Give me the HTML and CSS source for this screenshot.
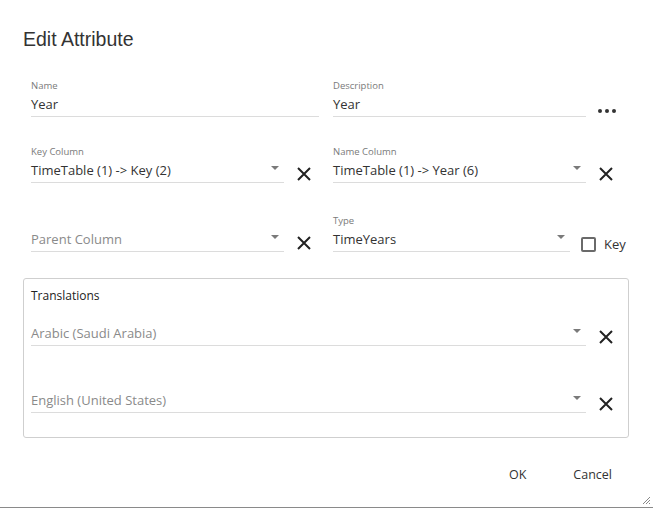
FILE: index.html
```html
<!DOCTYPE html>
<html>
<head>
<meta charset="utf-8">
<link rel="stylesheet" href="styles.css">
</head>
<body>
<div class="dialog">
  <h1 class="title">Edit Attribute</h1>
  <div class="form">
    <div class="row row1">
      <div class="field w-name">
        <div class="label">Name</div>
        <div class="input"><span class="value">Year</span></div>
      </div>
      <div class="field w-desc">
        <div class="label">Description</div>
        <div class="input"><span class="value">Year</span></div>
      </div>
      <div class="dots"><i></i><i></i><i></i></div>
    </div>

    <div class="row row2">
      <div class="field w-sel">
        <div class="label">Key Column</div>
        <div class="input"><span class="value">TimeTable (1) -&gt; Key (2)</span><span class="arrow"></span></div>
      </div>
      <svg class="x" viewBox="0 0 14 14"><path d="M1 1L13 13M13 1L1 13"/></svg>
      <div class="field w-sel">
        <div class="label">Name Column</div>
        <div class="input"><span class="value">TimeTable (1) -&gt; Year (6)</span><span class="arrow"></span></div>
      </div>
      <svg class="x" viewBox="0 0 14 14"><path d="M1 1L13 13M13 1L1 13"/></svg>
    </div>

    <div class="row row3">
      <div class="field w-sel">
        <div class="label"></div>
        <div class="input"><span class="value placeholder">Parent Column</span><span class="arrow"></span></div>
      </div>
      <svg class="x" viewBox="0 0 14 14"><path d="M1 1L13 13M13 1L1 13"/></svg>
      <div class="field w-type">
        <div class="label">Type</div>
        <div class="input"><span class="value">TimeYears</span><span class="arrow"></span></div>
      </div>
      <label class="check"><span class="box"></span><span class="check-text">Key</span></label>
    </div>

    <fieldset class="group">
      <div class="group-title">Translations</div>
      <div class="trow trow1">
        <div class="field w-tr">
          <div class="input"><span class="value placeholder">Arabic (Saudi Arabia)</span><span class="arrow"></span></div>
        </div>
        <svg class="x" viewBox="0 0 14 14"><path d="M1 1L13 13M13 1L1 13"/></svg>
      </div>
      <div class="trow trow2">
        <div class="field w-tr">
          <div class="input"><span class="value placeholder">English (United States)</span><span class="arrow"></span></div>
        </div>
        <svg class="x" viewBox="0 0 14 14"><path d="M1 1L13 13M13 1L1 13"/></svg>
      </div>
    </fieldset>
  </div>

  <div class="actions">
    <button class="btn btn-ok">OK</button>
    <button class="btn btn-cancel">Cancel</button>
  </div>
  <svg class="grip" viewBox="0 0 10 10"><path d="M9 2L2 9M9 5L5 9M9 8L8 9"/></svg>
</div>
</body>
</html>
```

FILE: styles.css
```css
* { box-sizing: border-box; }
html, body {
  margin: 0;
  padding: 0;
  background: #fff;
}
body {
  width: 653px;
  height: 509px;
  overflow: hidden;
  font-family: "Open Sans", "Noto Sans", sans-serif;
  color: #333;
}
.dialog {
  position: relative;
  height: 508px;
  border-bottom: 1px solid #8a8a8a;
}
.title {
  margin: 0;
  padding: 27px 0 0 23px;
  height: 79px;
  font-family: "Liberation Sans", Arial, sans-serif;
  font-weight: 400;
  font-size: 19.5px;
  line-height: 24px;
  color: #333;
}
.form {
  padding-left: 23px;
}
.row {
  display: flex;
  align-items: flex-start;
  padding-left: 8px;
}
.row2 { margin-top: 28px; }
.row3 { margin-top: 31px; }
.field { flex: none; }
.w-name { width: 288px; margin-right: 14px; }
.w-desc { width: 253px; }
.w-sel { width: 253px; }
.w-type { width: 237px; }
.w-tr { width: 555px; }
.label {
  height: 14px;
  font-size: 9.5px;
  line-height: 14px;
  color: #7a7a7a;
}
.input {
  position: relative;
  height: 24px;
  border-bottom: 1px solid #dcdcdc;
  display: flex;
  align-items: center;
  font-size: 13px;
  line-height: 16px;
  padding-bottom: 2px;
}
.value { color: #333; white-space: nowrap; }
.placeholder { color: #8a8a8a; }
.arrow {
  position: absolute;
  right: 5px;
  top: 7px;
  width: 0;
  height: 0;
  border-left: 4.5px solid transparent;
  border-right: 4.5px solid transparent;
  border-top: 4px solid #7a7a7a;
}
.x {
  flex: none;
  width: 14px;
  height: 14px;
  margin: 22px 22px 0 13px;
  fill: none;
  stroke: #222;
  stroke-width: 2;
}
.row1 .dots {
  display: flex;
  gap: 3px;
  margin: 30px 0 0 12px;
}
.dots i {
  width: 4px;
  height: 4px;
  border-radius: 50%;
  background: #333;
}
.check {
  display: flex;
  align-items: center;
  margin: 21px 0 0 11px;
  font-size: 13px;
  color: #333;
}
.box {
  width: 15px;
  height: 15px;
  border: 2px solid #6a6a6a;
  border-radius: 2px;
  margin-right: 8px;
}
.group {
  margin: 25px 0 0 0;
  padding: 8px 0 0 7px;
  width: 606px;
  height: 160px;
  border: 1px solid #cfcfcf;
  border-radius: 3px;
}
.group-title {
  font-size: 12px;
  line-height: 18px;
  color: #222;
  height: 18px;
}
.trow {
  display: flex;
  align-items: flex-start;
}
.trow1 { margin-top: 17px; }
.trow2 { margin-top: 43px; }
.trow .x { margin-top: 8px; margin-right: 0; }
.actions {
  display: flex;
  justify-content: flex-end;
  padding: 28px 41px 0 0;
  gap: 47px;
}
.btn {
  border: none;
  background: none;
  padding: 0;
  font-family: "Open Sans", "Noto Sans", sans-serif;
  font-size: 12.5px;
  line-height: 18px;
  color: #333;
}
.grip {
  position: absolute;
  right: 2px;
  bottom: 2px;
  width: 10px;
  height: 10px;
  fill: none;
  stroke: #888;
  stroke-width: 1;
}
```
